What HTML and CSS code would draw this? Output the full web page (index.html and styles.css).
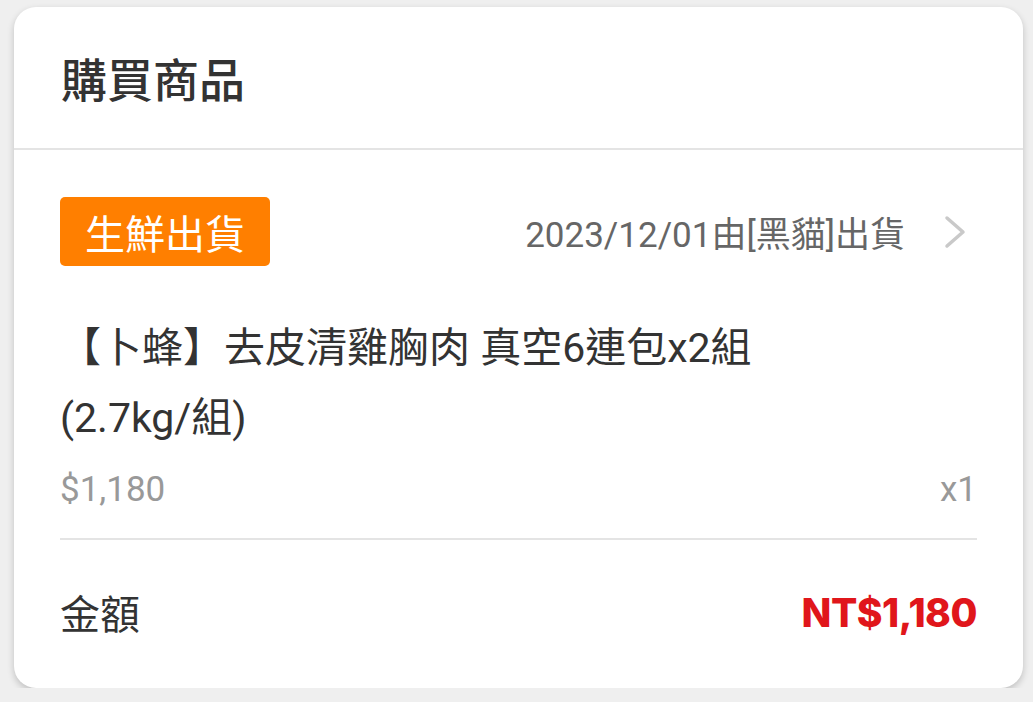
FILE: index.html
```html
<!DOCTYPE html>
<html lang="zh-Hant">
<head>
  <meta charset="UTF-8">
  <meta name="viewport" content="width=device-width, initial-scale=1.0">
  <title>購買商品</title>
  <link rel="stylesheet" href="styles.css">
</head>
<body>
  <div class="card">
    <!-- 標題 -->
    <div class="card-head">
      <h2 class="title">購買商品</h2>
    </div>

    <div class="card-body">
      <!-- 出貨資訊 -->
      <div class="ship">
        <span class="badge">生鮮出貨</span>
        <a href="#" class="ship-info">
          <span class="ship-date">2023/12/01由[黑貓]出貨</span>
          <svg class="arrow" viewBox="0 0 22 34" width="22" height="34">
            <polyline points="3,3 19,17 3,31" fill="none" stroke="#c9c9c9" stroke-width="3.5" stroke-linecap="round" stroke-linejoin="round"/>
          </svg>
        </a>
      </div>

      <!-- 商品 -->
      <p class="item-name">【卜蜂】去皮清雞胸肉 真空6連包x2組<br>(2.7kg/組)</p>
      <div class="item-row">
        <span class="price">$1,180</span>
        <span class="qty">x1</span>
      </div>

      <!-- 金額 -->
      <div class="total">
        <span class="total-label">金額</span>
        <span class="total-value">NT$1,180</span>
      </div>
    </div>
  </div>
</body>
</html>
```

FILE: styles.css
```css
/* reset */
* {
  margin: 0;
  padding: 0;
  box-sizing: border-box;
}
a {
  text-decoration: none;
  color: inherit;
}

body {
  background: #efefef;
  padding: 7px 10px 0 14px;
  font-family: Roboto, "Noto Sans CJK TC", sans-serif;
  color: #333;
}

/* 卡片 */
.card {
  width: 1009px;
  background: #fff;
  border-radius: 22px;
  box-shadow: 0 3px 7px rgba(0, 0, 0, 0.2);
  overflow: hidden;
}

.card-head {
  height: 143px;
  display: flex;
  align-items: center;
  padding: 0 47px 2px;
  border-bottom: 2px solid #e4e4e4;
}
.title {
  font-size: 46px;
  font-weight: 500;
  color: #333;
}

.card-body {
  padding: 47px 46px 46px;
}

/* 出貨資訊 */
.ship {
  display: flex;
  justify-content: space-between;
  align-items: center;
}
.badge {
  display: flex;
  align-items: center;
  height: 69px;
  padding: 0 25px;
  background: #ff7f00;
  color: #fff;
  font-size: 40px;
  border-radius: 5px;
}
.ship-info {
  display: flex;
  align-items: center;
}
.ship-date {
  font-size: 35px;
  color: #666;
}
.arrow {
  margin-left: 39px;
  margin-right: 11px;
}

/* 商品 */
.item-name {
  margin-top: 47px;
  font-size: 41px;
  line-height: 70px;
  color: #333;
}
.item-row {
  display: flex;
  justify-content: space-between;
  align-items: center;
  height: 40px;
  margin-top: 16px;
  font-size: 35px;
  color: #999;
}

/* 金額 */
.total {
  display: flex;
  justify-content: space-between;
  align-items: center;
  height: 104px;
  margin-top: 29px;
  padding-top: 42px;
  border-top: 2px solid #e4e4e4;
}
.total-label {
  font-size: 40px;
  color: #333;
}
.total-value {
  font-family: Inter, Roboto, sans-serif;
  font-size: 39px;
  font-weight: 800;
  letter-spacing: -0.5px;
  color: #e0161b;
}
```
